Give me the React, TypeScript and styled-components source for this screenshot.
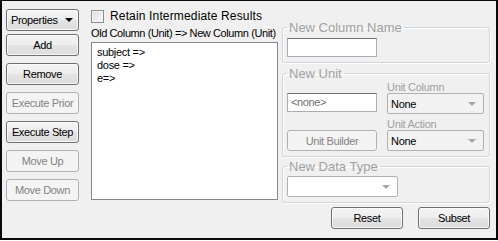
import styled, { createGlobalStyle, css } from "styled-components";

const GlobalStyle = createGlobalStyle`
  html, body {
    margin: 0;
    padding: 0;
    background: #ffffff;
  }
  body {
    font-family: "Liberation Sans", Arial, sans-serif;
    font-size: 11px;
    color: #000;
  }
`;

const Frame = styled.div`
  width: 498px;
  height: 240px;
  box-sizing: border-box;
  border: 2px solid #0a0a0a;
  border-top-width: 1px;
  background: #f0f0f0;
  display: flex;
  align-items: flex-start;
  padding: 8px 6px 0 4px;
`;

const ButtonColumn = styled.div`
  width: 73px;
  display: flex;
  flex-direction: column;
  gap: 7px;
`;

// grid placement helper for controls living inside the unit grid
const cell = (col?: number, row?: number) =>
  row
    ? css`
        grid-column: ${col};
        grid-row: ${row};
      `
    : "";

const WinButton = styled.button<{ $w?: number; $h?: number; $col?: number; $row?: number }>`
  box-sizing: border-box;
  width: ${(p) => (p.$w ? `${p.$w}px` : "100%")};
  height: ${(p) => p.$h ?? 22}px;
  margin: 0;
  padding: 0;
  border: 1px solid #707070;
  border-radius: 3px;
  background: linear-gradient(#f4f4f4 0%, #ededed 50%, #e4e4e4 51%, #dcdcdc 100%);
  box-shadow: inset 0 0 0 1px rgba(255, 255, 255, 0.75);
  font-family: "Liberation Sans", Arial, sans-serif;
  font-size: 11px;
  letter-spacing: -0.35px;
  color: #000;
  text-align: center;
  ${(p) => cell(p.$col, p.$row)}

  &:disabled {
    border-color: #adb2b5;
    background: #f4f4f4;
    box-shadow: none;
    color: #838383;
  }
`;

const PropertiesButton = styled(WinButton)`
  display: flex;
  align-items: center;
  justify-content: space-between;
  padding: 0 5px 0 4px;
  margin-bottom: -4px;
`;

const DropArrow = styled.span<{ $muted?: boolean }>`
  width: 0;
  height: 0;
  border-left: 4px solid transparent;
  border-right: 4px solid transparent;
  border-top: 4px solid ${(p) => (p.$muted ? "#a7a7a7" : "#000")};
`;

const ListColumn = styled.div`
  width: 187px;
  margin-left: 12px;
  display: flex;
  flex-direction: column;
`;

const CheckRow = styled.label`
  display: flex;
  align-items: center;
  gap: 6px;
  height: 14px;
  font-size: 12px;
  letter-spacing: 0.15px;
`;

const CheckBox = styled.input`
  appearance: none;
  width: 13px;
  height: 13px;
  margin: 0;
  box-sizing: border-box;
  border: 1px solid #8e8f8f;
  background: linear-gradient(135deg, #dcdcdc, #fbfbfb);
  box-shadow: inset 0 0 0 1px #f4f4f4;
`;

const ListCaption = styled.div`
  margin-top: 3px;
  line-height: 14px;
  letter-spacing: -0.4px;
  white-space: nowrap;
`;

const ListBox = styled.div`
  box-sizing: border-box;
  margin-top: 2px;
  height: 158px;
  background: #fff;
  border: 1px solid #828790;
  padding: 3px 5px 2px;
  line-height: 13px;
  letter-spacing: -0.3px;
`;

const RightColumn = styled.div`
  width: 208px;
  margin-left: 4px;
  margin-top: 11px;
  display: flex;
  flex-direction: column;
`;

const Group = styled.fieldset<{ $gapTop?: number; $padTop?: number }>`
  margin: ${(p) => p.$gapTop ?? 0}px 0 0 0;
  padding: ${(p) => p.$padTop ?? 3}px 4px 5px 4px;
  min-width: 0;
  border: 1px solid #cfd6db;
  border-radius: 3px;
  box-shadow: inset 1px 1px 0 #fff, 1px 1px 0 #fff;
`;

const GroupTitle = styled.legend`
  padding: 0 2px;
  font-size: 13px;
  line-height: 15px;
  color: #a0a0a0;
`;

const TextBox = styled.div<{ $w: number; $col?: number; $row?: number }>`
  box-sizing: border-box;
  width: ${(p) => p.$w}px;
  height: 19px;
  background: #fff;
  border: 1px solid #abadb3;
  border-top-color: #707070;
  padding: 2px 3px;
  color: #6d6d6d;
  letter-spacing: -0.4px;
  line-height: 13px;
  ${(p) => cell(p.$col, p.$row)}
`;

const UnitGrid = styled.div`
  display: grid;
  grid-template-columns: 90px 97px;
  grid-template-rows: 12px 21px 16px 21px;
  column-gap: 10px;
  align-items: start;
`;

const FieldLabel = styled.div<{ $row: number }>`
  grid-column: 2;
  grid-row: ${(p) => p.$row};
  align-self: end;
  line-height: 12px;
  color: #a0a0a0;
  letter-spacing: -0.3px;
`;

const ComboBox = styled.div<{ $w?: number; $row?: number; $white?: boolean }>`
  box-sizing: border-box;
  width: ${(p) => (p.$w ? `${p.$w}px` : "100%")};
  height: 21px;
  display: flex;
  align-items: center;
  justify-content: space-between;
  padding: 0 7px 0 3px;
  border: 1px solid #adb2b5;
  border-radius: 2px;
  background: ${(p) => (p.$white ? "#fff" : "#f2f2f2")};
  letter-spacing: -0.3px;
  ${(p) => cell(2, p.$row)}
`;

const ActionRow = styled.div`
  display: flex;
  justify-content: flex-end;
  gap: 15px;
  margin-top: 4px;
`;

const leftButtons = [
  { label: "Add", disabled: false },
  { label: "Remove", disabled: false },
  { label: "Execute Prior", disabled: true },
  { label: "Execute Step", disabled: false },
  { label: "Move Up", disabled: true },
  { label: "Move Down", disabled: true },
];

const mappings = ["subject =>", "dose =>", "e=>"];

export default function App() {
  return (
    <>
      <GlobalStyle />
      <Frame>
        <ButtonColumn>
          <PropertiesButton>
            <span>Properties</span>
            <DropArrow />
          </PropertiesButton>
          {leftButtons.map((b) => (
            <WinButton key={b.label} disabled={b.disabled}>
              {b.label}
            </WinButton>
          ))}
        </ButtonColumn>

        <ListColumn>
          <CheckRow>
            <CheckBox type="checkbox" />
            Retain Intermediate Results
          </CheckRow>
          <ListCaption>Old Column (Unit) =&gt; New Column (Unit)</ListCaption>
          <ListBox>
            {mappings.map((m) => (
              <div key={m}>{m}</div>
            ))}
          </ListBox>
        </ListColumn>

        <RightColumn>
          <Group>
            <GroupTitle>New Column Name</GroupTitle>
            <TextBox $w={90} />
          </Group>

          <Group $gapTop={3} $padTop={0}>
            <GroupTitle>New Unit</GroupTitle>
            <UnitGrid>
              <FieldLabel $row={1}>Unit Column</FieldLabel>
              <TextBox $w={90} $col={1} $row={2}>
                &lt;none&gt;
              </TextBox>
              <ComboBox $row={2}>
                None
                <DropArrow $muted />
              </ComboBox>
              <FieldLabel $row={3}>Unit Action</FieldLabel>
              <WinButton disabled $h={21} $col={1} $row={4}>
                Unit Builder
              </WinButton>
              <ComboBox $row={4}>
                None
                <DropArrow $muted />
              </ComboBox>
            </UnitGrid>
          </Group>

          <Group $gapTop={2} $padTop={2}>
            <GroupTitle>New Data Type</GroupTitle>
            <ComboBox $w={111} $white>
              <span />
              <DropArrow $muted />
            </ComboBox>
          </Group>

          <ActionRow>
            <WinButton $w={72}>Reset</WinButton>
            <WinButton $w={72}>Subset</WinButton>
          </ActionRow>
        </RightColumn>
      </Frame>
    </>
  );
}
